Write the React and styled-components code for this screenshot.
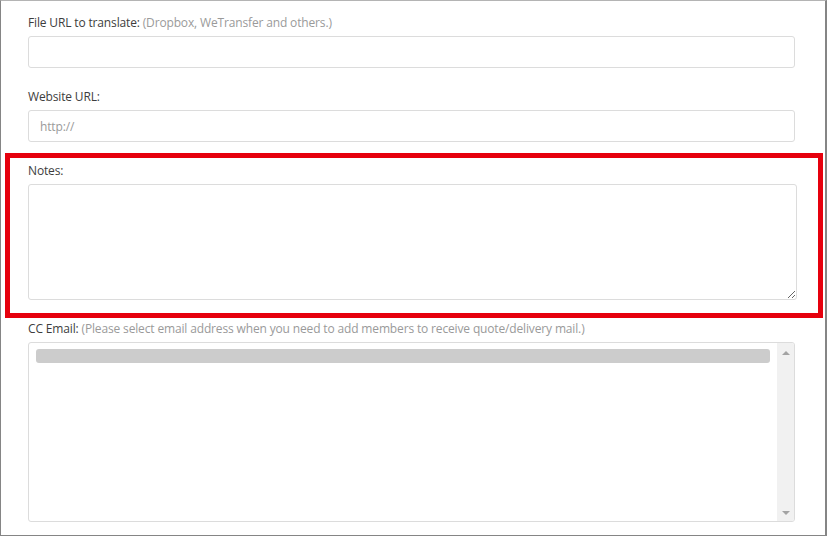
import React from "react";
import styled, { createGlobalStyle } from "styled-components";

const GlobalStyle = createGlobalStyle`
  html, body {
    margin: 0;
    padding: 0;
    background: #ffffff;
  }
  body {
    font-family: "Open Sans", "Liberation Sans", Arial, sans-serif;
  }
`;

const Frame = styled.div`
  box-sizing: border-box;
  width: 827px;
  height: 536px;
  padding: 13px 30px 0 27px;
  border: 1px solid #858585;
  border-top-color: #b4b4b4;
  border-right-width: 2px;
  background: #ffffff;
  overflow: hidden;
`;

const FormGroup = styled.div`
  position: relative;
  margin-bottom: 20px;

  ${({ highlighted }) =>
    highlighted &&
    `
    &::before {
      content: "";
      position: absolute;
      top: -9px;
      left: -23px;
      right: -28px;
      bottom: -18px;
      border: 5px solid #e6000d;
      pointer-events: none;
    }
  `}
`;

const Label = styled.label`
  display: block;
  margin-bottom: 5px;
  font-size: 12px;
  line-height: 17px;
  letter-spacing: -0.15px;
  color: #3d3d3d;
`;

const Hint = styled.span`
  color: #9a9a9a;
`;

const TextInput = styled.input`
  box-sizing: border-box;
  display: block;
  width: 100%;
  height: 32px;
  padding: 0 11px;
  border: 1px solid #dcdcdc;
  border-radius: 3px;
  font-family: inherit;
  font-size: 12px;
  letter-spacing: -0.15px;
  color: #333;
  outline: none;

  &::placeholder {
    color: #9a9a9a;
  }
`;

const TextArea = styled.textarea`
  box-sizing: border-box;
  display: block;
  width: calc(100% + 2px);
  height: 116px;
  padding: 6px 11px;
  border: 1px solid #dcdcdc;
  border-radius: 3px;
  font-family: inherit;
  font-size: 12px;
  resize: both;
  outline: none;
`;

const MultiSelect = styled.div`
  box-sizing: border-box;
  display: flex;
  height: 180px;
  border: 1px solid #dcdcdc;
  border-radius: 3px;
  overflow: hidden;
`;

const OptionList = styled.div`
  flex: 1;
  padding: 6px 7px;
`;

const SearchChip = styled.div`
  height: 14px;
  border-radius: 3px;
  background: #cccccc;
`;

const ScrollTrack = styled.div`
  display: flex;
  flex-direction: column;
  justify-content: space-between;
  align-items: center;
  width: 17px;
  padding: 8px 0 6px;
  box-sizing: border-box;
  background: #f1f1f1;
`;

const Arrow = styled.span`
  width: 0;
  height: 0;
  border-left: 4px solid transparent;
  border-right: 4px solid transparent;
  ${({ dir }) =>
    dir === "up"
      ? "border-bottom: 4px solid #a3a3a3;"
      : "border-top: 4px solid #a3a3a3;"}
`;

export default function App() {
  return (
    <>
      <GlobalStyle />
      <Frame>
        <FormGroup>
          <Label>
            File URL to translate: <Hint>(Dropbox, WeTransfer and others.)</Hint>
          </Label>
          <TextInput type="text" />
        </FormGroup>

        <FormGroup>
          <Label>Website URL:</Label>
          <TextInput type="text" placeholder="http://" />
        </FormGroup>

        <FormGroup highlighted>
          <Label>Notes:</Label>
          <TextArea />
        </FormGroup>

        <FormGroup>
          <Label>
            CC Email:{" "}
            <Hint>
              (Please select email address when you need to add members to
              receive quote/delivery mail.)
            </Hint>
          </Label>
          <MultiSelect>
            <OptionList>
              <SearchChip />
            </OptionList>
            <ScrollTrack>
              <Arrow dir="up" />
              <Arrow dir="down" />
            </ScrollTrack>
          </MultiSelect>
        </FormGroup>
      </Frame>
    </>
  );
}
